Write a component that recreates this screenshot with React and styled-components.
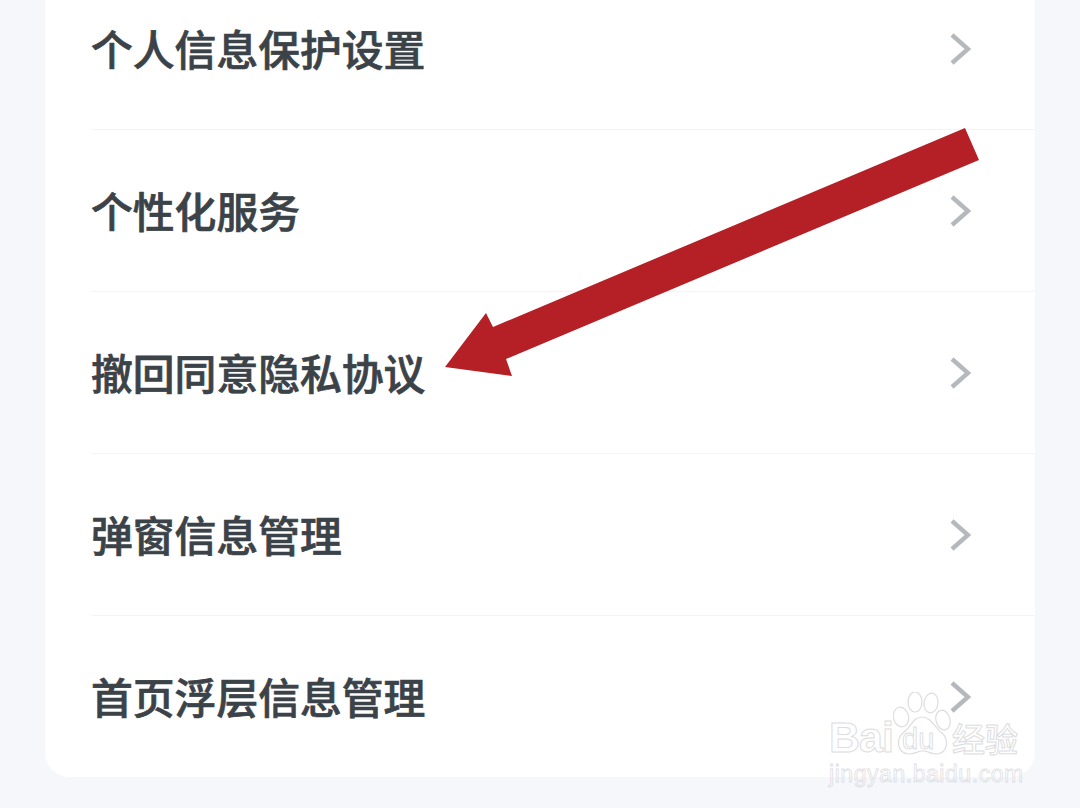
import React from 'react'
import styled, { createGlobalStyle } from 'styled-components'

const items = ['个人信息保护设置', '个性化服务', '撤回同意隐私协议', '弹窗信息管理', '首页浮层信息管理']

const Global = createGlobalStyle`
    html, body { margin:0; padding:0; background:#f5f7fb; }
    body { width:1080px; height:808px; overflow:hidden; }
`

const Page = styled.div`
    position:relative;
    width:1080px;
    height:808px;
    overflow:hidden;
    background:#f5f7fb;
    font-family:"Noto Sans CJK SC", "Noto Sans", sans-serif;
`
const Card = styled.ul`
    list-style:none;
    margin:-32px 45px 0;
    padding:0;
    background:#fff;
    border-radius:24px;
`
const Row = styled.li`
    height:${p => (p.$last ? '161px' : '162px')};
    box-sizing:border-box;
    margin-left:46px;
    padding-right:64px;
    display:flex;
    align-items:center;
    justify-content:space-between;
    border-bottom:${p => (p.$last ? 'none' : '1px solid #f3f4f6')};
`
const Label = styled.span`
    font-size:41.8px;
    font-weight:500;
    line-height:1;
    color:#3b4248;
    -webkit-text-stroke:0.7px #3b4248;
`
const Arrow = styled.svg`
    position:absolute;
    left:0;
    top:0;
`
const Watermark = styled.div`
    position:absolute;
    left:829px;
    top:692px;
    width:196px;
    height:94px;
    color:transparent;
    font-family:"Liberation Sans", sans-serif;
    -webkit-text-stroke:1px #dcdde0;
`
const Logo = styled.div`
    display:flex;
    align-items:flex-end;
    height:66px;
`
const Bai = styled.span`
    font-size:43px;
    font-weight:700;
    line-height:42px;
    width:64px;
    flex:none;
    letter-spacing:-1px;
`
const Paw = styled.svg`
    width:58px;
    height:66px;
    flex:none;
`
const Jing = styled.span`
    font-family:"Noto Sans CJK SC", sans-serif;
    font-weight:500;
    font-size:33px;
    line-height:40px;
    margin-left:1px;
`
const Domain = styled.div`
    margin-top:3px;
    font-size:23px;
    line-height:26px;
    letter-spacing:0.55px;
    white-space:nowrap;
    -webkit-text-stroke:0.8px #dfe0e3;
`

const Chevron = () => (
    <svg width="22" height="34" viewBox="0 0 22 34" fill="none">
        <path d="M3 3 L19 17 L3 31" stroke="#b5b9bd" strokeWidth="4.4" />
    </svg>
)

export default function App() {
    return (
        <Page>
            <Global />
            <Card>
                {items.map((t, i) => (
                    <Row key={t} $last={i === items.length - 1}>
                        <Label>{t}</Label>
                        <Chevron />
                    </Row>
                ))}
            </Card>
            <Arrow width="1080" height="808" viewBox="0 0 1080 808">
                <polygon
                    points="965,128 979,160 506,359 512,376 445,367 486,313 493,327"
                    fill="#b42025"
                />
            </Arrow>
            <Watermark>
                <Logo>
                    <Bai>Bai</Bai>
                    <Paw viewBox="0 0 58 66" fill="none" stroke="#dcdde0" strokeWidth="1.2">
                        <ellipse cx="8" cy="25" rx="7.5" ry="10" transform="rotate(-12 8 25)" />
                        <ellipse cx="22" cy="10" rx="7" ry="10" />
                        <ellipse cx="38" cy="11" rx="7" ry="10" transform="rotate(8 38 11)" />
                        <ellipse cx="50" cy="28" rx="7" ry="10" transform="rotate(-14 50 28)" />
                        <path d="M29 25 C20 25 18 35 11 40 C3 46 3 61 16 62 C22 62 25 59 30 59 C35 59 38 62 44 62 C55 61 56 47 49 41 C41 35 38 25 29 25 Z" />
                        <text x="9" y="57" fontSize="29" fontFamily="Liberation Sans, sans-serif" strokeWidth="0.9">du</text>
                    </Paw>
                    <Jing>经验</Jing>
                </Logo>
                <Domain>jingyan.baidu.com</Domain>
            </Watermark>
        </Page>
    )
}
